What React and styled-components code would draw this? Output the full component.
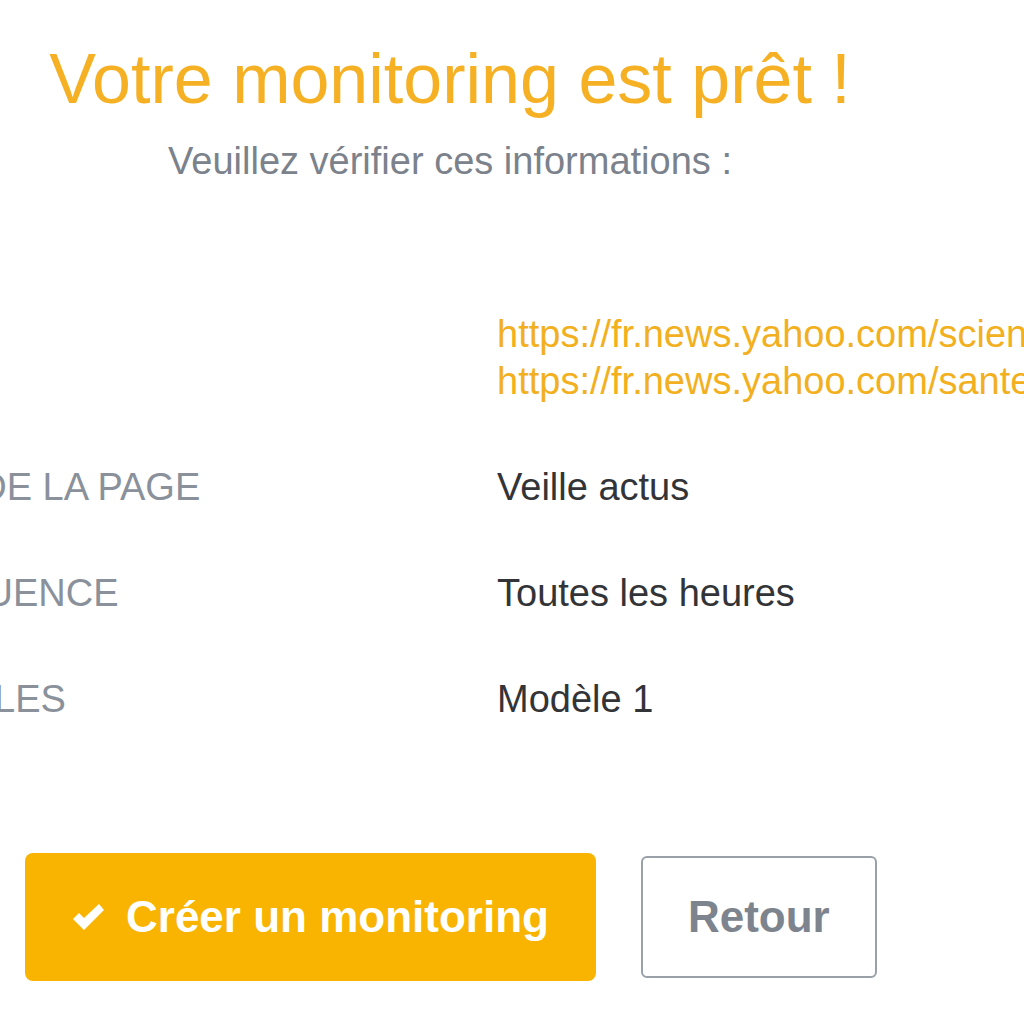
import React from "react";
import styled, { createGlobalStyle } from "styled-components";

const Global = createGlobalStyle`
  html, body { margin: 0; padding: 0; background: #ffffff; }
  body { font-family: "Liberation Sans", Arial, sans-serif; }
`;

const Page = styled.div`
  width: 1024px;
  height: 1024px;
  overflow: hidden;
  background: #fff;
  padding-top: 39px;
  box-sizing: border-box;
`;

const Header = styled.header`
  width: 900px;
  text-align: center;
`;

const Title = styled.h1`
  margin: 0;
  font-size: 70px;
  line-height: 80px;
  font-weight: 400;
  color: #f5b024;
  white-space: nowrap;
`;

const Subtitle = styled.p`
  margin: 19px 0 0;
  font-size: 38px;
  line-height: 47px;
  color: #7b828c;
  white-space: nowrap;
`;

const Details = styled.dl`
  margin: 126px 0 0 -120px;
  display: grid;
  grid-template-columns: 617px 1fr;
  row-gap: 59px;
  font-size: 38px;
  line-height: 47px;
`;

const Label = styled.dt`
  margin: 0;
  color: #8a919b;
  text-transform: uppercase;
  white-space: nowrap;
`;

const Value = styled.dd`
  margin: 0;
  color: #333438;
  white-space: nowrap;
  overflow: hidden;
`;

const Link = styled.a`
  display: block;
  color: #f2b021;
  text-decoration: none;
`;

const Actions = styled.div`
  margin-top: 130px;
  padding-left: 25px;
  display: flex;
  align-items: center;
  gap: 45px;
`;

const Button = styled.button`
  font-family: "Liberation Sans", Arial, sans-serif;
  font-weight: 700;
  font-size: 44px;
  display: inline-flex;
  align-items: center;
  gap: 21px;
  box-sizing: border-box;
  cursor: pointer;
  border-radius: ${(p) => (p.$primary ? "8px" : "6px")};
  height: ${(p) => (p.$primary ? "128px" : "122px")};
  padding: 0 ${(p) => (p.$primary ? "47px" : "45px")};
  background: ${(p) => (p.$primary ? "#f8b400" : "#ffffff")};
  color: ${(p) => (p.$primary ? "#ffffff" : "#7d848d")};
  border: ${(p) => (p.$primary ? "none" : "2px solid #9aa0a8")};
`;

const Check = () => (
  <svg width="33" height="28" viewBox="0 0 33 28" aria-hidden="true">
    <path d="M1 16 L7 10 L12 15 L27 1 L32 7 L12 27 Z" fill="#ffffff" />
  </svg>
);

const rows = [
  { label: "Nom de la page", value: "Veille actus" },
  { label: "Fréquence", value: "Toutes les heures" },
  { label: "Modèles", value: "Modèle 1" },
];

export default function App() {
  return (
    <>
      <Global />
      <Page>
        <Header>
          <Title>Votre monitoring est prêt !</Title>
          <Subtitle>Veuillez vérifier ces informations :</Subtitle>
        </Header>
        <Details>
          <Label>URL</Label>
          <Value>
            <Link href="#">https://fr.news.yahoo.com/science/</Link>
            <Link href="#">https://fr.news.yahoo.com/sante/</Link>
          </Value>
          {rows.map((r) => (
            <React.Fragment key={r.label}>
              <Label>{r.label}</Label>
              <Value>{r.value}</Value>
            </React.Fragment>
          ))}
        </Details>
        <Actions>
          <Button $primary>
            <Check />
            Créer un monitoring
          </Button>
          <Button>Retour</Button>
        </Actions>
      </Page>
    </>
  );
}
